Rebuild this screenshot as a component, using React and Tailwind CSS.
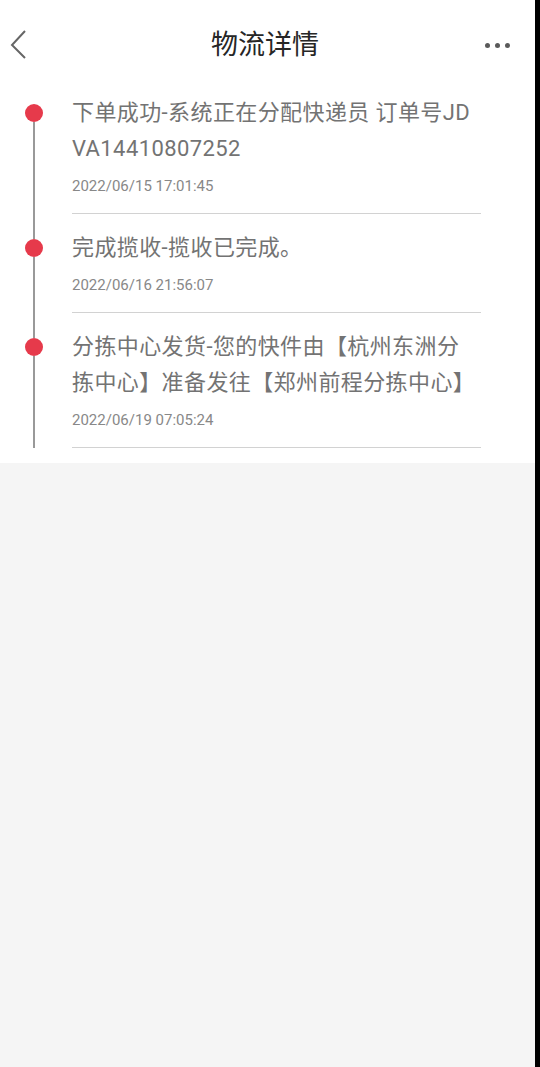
const steps = [
  {
    text: "下单成功-系统正在分配快递员 订单号JDVA14410807252",
    time: "2022/06/15 17:01:45",
  },
  {
    text: "完成揽收-揽收已完成。",
    time: "2022/06/16 21:56:07",
  },
  {
    text: "分拣中心发货-您的快件由【杭州东洲分拣中心】准备发往【郑州前程分拣中心】",
    time: "2022/06/19 07:05:24",
  },
];

const font = { fontFamily: "Roboto, 'Noto Sans CJK SC', sans-serif" };

export default function App() {
  return (
    <div className="flex min-h-[1067px] w-[540px] bg-black" style={font}>
      <div className="flex w-[535px] flex-col bg-[#f5f5f5]">
        <div className="bg-white pb-[15px]">
          {/* header */}
          <div className="grid h-[79px] grid-cols-[1fr_auto_1fr] items-center pt-[11px] pl-[10px] pr-[15px]">
            <svg width="18" height="30" viewBox="0 0 18 30" fill="none">
              <path d="M15 1 L2 15 L15 28" stroke="#666" strokeWidth="2" />
            </svg>
            <h1 className="text-[27px] leading-none text-[#262626]">物流详情</h1>
            <div className="flex items-center justify-end gap-[5px] pr-[10px]">
              <span className="h-[5px] w-[5px] rounded-full bg-[#5a5a5a]" />
              <span className="h-[5px] w-[5px] rounded-full bg-[#5a5a5a]" />
              <span className="h-[5px] w-[5px] rounded-full bg-[#5a5a5a]" />
            </div>
          </div>

          {/* timeline */}
          {steps.map((s, i) => (
            <div key={i} className="flex">
              <div className="flex w-[72px] flex-col">
                <div className="ml-[25px] flex w-[18px] flex-1 flex-col items-center">
                  <div className={`h-[25px] w-[2px] ${i === 0 ? "bg-transparent" : "bg-[#999]"}`} />
                  <div className="h-[18px] w-[18px] rounded-full bg-[#e63a4b]" />
                  <div className="w-[2px] flex-1 bg-[#999]" />
                </div>
              </div>
              <div className="w-[409px] border-b border-[#d2d2d2] pt-4 pb-[17px]">
                <p className="break-all text-[22px] leading-[36px] tracking-[0.4px] text-[#737373]">{s.text}</p>
                <p className="mt-[9px] text-[15px] leading-[20px] text-[#888]">{s.time}</p>
              </div>
            </div>
          ))}
        </div>
      </div>
    </div>
  );
}
